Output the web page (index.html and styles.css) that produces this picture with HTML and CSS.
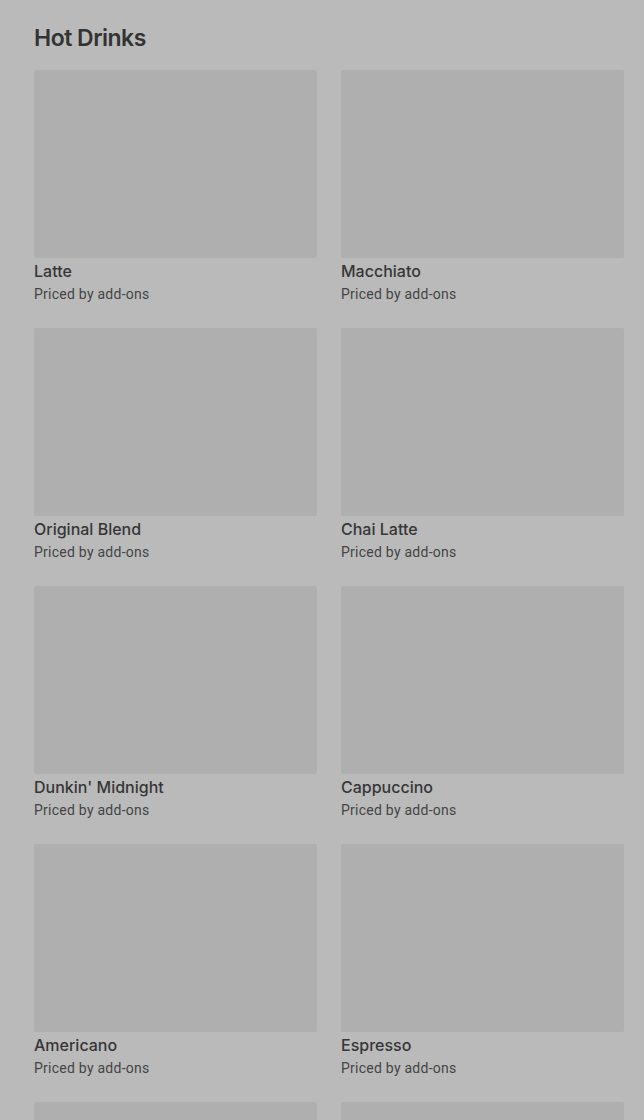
FILE: index.html
```html
<!DOCTYPE html>
<html>
<head>
<meta charset="utf-8">
<link rel="stylesheet" href="styles.css">
</head>
<body>
<main class="page">
  <h1 class="title">Hot Drinks</h1>
  <div class="grid">
    <div class="card"><div class="thumb"></div><div class="name">Latte</div><div class="sub">Priced by add-ons</div></div>
    <div class="card"><div class="thumb"></div><div class="name">Macchiato</div><div class="sub">Priced by add-ons</div></div>
    <div class="card"><div class="thumb"></div><div class="name">Original Blend</div><div class="sub">Priced by add-ons</div></div>
    <div class="card"><div class="thumb"></div><div class="name">Chai Latte</div><div class="sub">Priced by add-ons</div></div>
    <div class="card"><div class="thumb"></div><div class="name">Dunkin' Midnight</div><div class="sub">Priced by add-ons</div></div>
    <div class="card"><div class="thumb"></div><div class="name">Cappuccino</div><div class="sub">Priced by add-ons</div></div>
    <div class="card"><div class="thumb"></div><div class="name">Americano</div><div class="sub">Priced by add-ons</div></div>
    <div class="card"><div class="thumb"></div><div class="name">Espresso</div><div class="sub">Priced by add-ons</div></div>
    <div class="card"><div class="thumb"></div></div>
    <div class="card"><div class="thumb"></div></div>
  </div>
</main>
</body>
</html>
```

FILE: styles.css
```css
html, body {
  margin: 0;
  padding: 0;
  background: #bababa;
  overflow: hidden;
}
.page {
  padding: 24px 20px 0 34px;
  font-family: Inter, "Liberation Sans", sans-serif;
}
.title {
  margin: 0 0 18px 0;
  font-size: 23px;
  line-height: 28px;
  font-weight: 600;
  letter-spacing: -0.5px;
  color: #333333;
}
.grid {
  display: grid;
  grid-template-columns: 283px 283px;
  column-gap: 24px;
  row-gap: 25px;
}
.card {
  display: flex;
  flex-direction: column;
}
.thumb {
  height: 188px;
  background: #afafaf;
  border-radius: 2px;
}
.name {
  margin-top: 3px;
  font-size: 16px;
  line-height: 20px;
  font-weight: 500;
  color: #363636;
}
.sub {
  margin-top: 4px;
  font-family: Roboto, "Liberation Sans", sans-serif;
  font-size: 14px;
  line-height: 18px;
  letter-spacing: 0.25px;
  color: #444444;
}
```
